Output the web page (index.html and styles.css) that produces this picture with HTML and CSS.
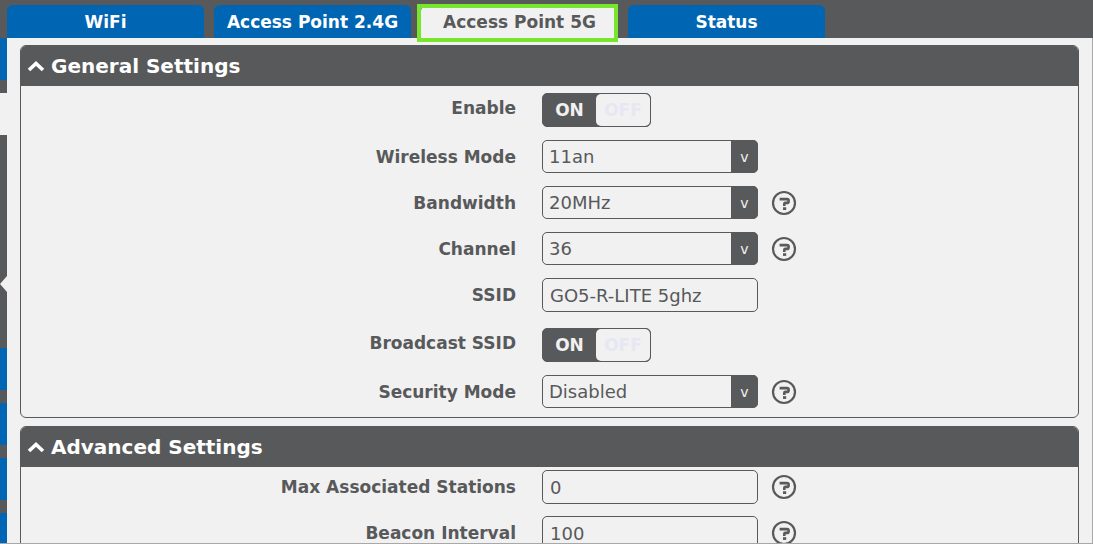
FILE: index.html
```html
<!DOCTYPE html>
<html lang="en">
<head>
    <meta charset="UTF-8">
    <meta name="viewport" content="width=device-width, initial-scale=1.0">
    <title>WiFi - Access Point 5G</title>
    <link rel="stylesheet" href="styles.css">
</head>
<body>
    <!-- Shared icons -->
    <svg class="icon-defs" aria-hidden="true">
        <symbol id="icon-help" viewBox="0 0 26 26">
            <circle cx="13" cy="13" r="11" fill="none" stroke="currentColor" stroke-width="2.2"/>
            <path d="M8.6 9.1H16Q17.6 9.1 17.6 10.6V11.4Q17.6 12.9 16 12.9H14.4Q13.3 12.9 13.3 14V16" fill="none" stroke="currentColor" stroke-width="2.6"/>
            <path d="M12 17.2h3.2v2.7h-3.2z" fill="currentColor"/>
        </symbol>
        <symbol id="icon-up" viewBox="0 0 18 12">
            <path d="M2 10L9 3.4L16 10" fill="none" stroke="currentColor" stroke-width="3.6"/>
        </symbol>
    </svg>

    <nav class="tabs">
        <a href="#" class="tab">WiFi</a>
        <a href="#" class="tab">Access Point 2.4G</a>
        <a href="#" class="tab active">Access Point 5G</a>
        <a href="#" class="tab">Status</a>
    </nav>

    <div class="page">
        <!-- Edge of the side menu -->
        <div class="rail">
            <div class="rail-item"></div>
            <div class="rail-item selected"></div>
            <div class="rail-submenu"><div class="rail-arrow"></div></div>
            <div class="rail-item"></div>
            <div class="rail-item"></div>
            <div class="rail-item"></div>
            <div class="rail-item"></div>
        </div>

        <main class="content">
            <section class="panel">
                <h2 class="panel-title"><svg class="chevron"><use href="#icon-up"/></svg>General Settings</h2>
                <div class="panel-body">
                    <div class="row row-toggle">
                        <label for="enable">Enable</label>
                        <div class="field">
                            <label class="toggle"><input type="checkbox" id="enable" checked><span class="on">ON</span><span class="off">OFF</span></label>
                        </div>
                    </div>
                    <div class="row">
                        <label for="mode">Wireless Mode</label>
                        <div class="field">
                            <div class="select"><select id="mode"><option>11an</option></select></div>
                        </div>
                    </div>
                    <div class="row">
                        <label for="bandwidth">Bandwidth</label>
                        <div class="field">
                            <div class="select"><select id="bandwidth"><option>20MHz</option></select></div>
                            <button class="help" aria-label="Help"><svg><use href="#icon-help"/></svg></button>
                        </div>
                    </div>
                    <div class="row">
                        <label for="channel">Channel</label>
                        <div class="field">
                            <div class="select"><select id="channel"><option>36</option></select></div>
                            <button class="help" aria-label="Help"><svg><use href="#icon-help"/></svg></button>
                        </div>
                    </div>
                    <div class="row">
                        <label for="ssid">SSID</label>
                        <div class="field">
                            <input type="text" id="ssid" value="GO5-R-LITE 5ghz">
                        </div>
                    </div>
                    <div class="row row-toggle">
                        <label for="broadcast">Broadcast SSID</label>
                        <div class="field">
                            <label class="toggle"><input type="checkbox" id="broadcast" checked><span class="on">ON</span><span class="off">OFF</span></label>
                        </div>
                    </div>
                    <div class="row">
                        <label for="security">Security Mode</label>
                        <div class="field">
                            <div class="select"><select id="security"><option>Disabled</option></select></div>
                            <button class="help" aria-label="Help"><svg><use href="#icon-help"/></svg></button>
                        </div>
                    </div>
                </div>
            </section>

            <section class="panel">
                <h2 class="panel-title"><svg class="chevron"><use href="#icon-up"/></svg>Advanced Settings</h2>
                <div class="panel-body compact">
                    <div class="row">
                        <label for="stations">Max Associated Stations</label>
                        <div class="field">
                            <input type="text" id="stations" value="0">
                            <button class="help" aria-label="Help"><svg><use href="#icon-help"/></svg></button>
                        </div>
                    </div>
                    <div class="row">
                        <label for="beacon">Beacon Interval</label>
                        <div class="field">
                            <input type="text" id="beacon" value="100">
                            <button class="help" aria-label="Help"><svg><use href="#icon-help"/></svg></button>
                        </div>
                    </div>
                </div>
            </section>
        </main>
    </div>
</body>
</html>
```
FILE: styles.css
```css
* {
    box-sizing: border-box;
}

body {
    margin: 0;
    height: 100vh;
    display: flex;
    flex-direction: column;
    overflow: hidden;
    background-color: #58595b;
    color: #58595b;
    font-family: Verdana, "DejaVu Sans", sans-serif;
    font-size: 17px;
}

.icon-defs {
    display: none;
}

/* Tabs */
.tabs {
    display: flex;
    gap: 10px;
    padding: 5px 7px 0;
}

.tab {
    position: relative;
    width: 197px;
    height: 33px;
    line-height: 34px;
    border-radius: 6px 6px 0 0;
    background-color: #0066b3;
    color: #fff;
    font-size: 17px;
    font-weight: bold;
    text-align: center;
    text-decoration: none;
    white-space: nowrap;
}

.tab.active {
    background-color: #f1f1f1;
    color: #58595b;
}

.tab.active::after {
    content: "";
    position: absolute;
    top: -1px;
    right: 0;
    bottom: -4px;
    left: -4px;
    border: 4px solid #79e62e;
}

/* Page */
.page {
    display: flex;
    flex: 1;
    min-height: 0;
    border-bottom: 1px solid #a8a8a8;
}

.rail {
    width: 7px;
    overflow: hidden;
}

.rail-item {
    height: 42px;
    margin-bottom: 13px;
    background-color: #0066b3;
}

.rail-item.selected {
    margin-bottom: 0;
    background-color: #f1f1f1;
}

.rail-submenu {
    height: 213px;
    padding-top: 141px;
}

.rail-arrow {
    border: solid transparent;
    border-width: 8px 7px 8px 0;
    border-right-color: #f1f1f1;
}

.content {
    flex: 1;
    padding: 7px 13px;
    overflow: hidden;
    background-color: #f1f1f1;
    border-right: 1px solid #a8a8a8;
}

/* Panels */
.panel {
    margin-bottom: 8px;
    border: 1px solid #58595b;
    border-radius: 6px;
    overflow: hidden;
}

.panel-title {
    display: flex;
    align-items: center;
    gap: 6px;
    height: 40px;
    margin: 0;
    padding-left: 6px;
    background-color: #58595b;
    color: #fff;
    font-size: 20px;
}

.chevron {
    width: 18px;
    height: 12px;
}

.panel-body {
    display: grid;
    gap: 13px;
    padding: 4px 41px 9px 0;
}

.panel-body.compact {
    gap: 12px;
    padding-top: 3px;
}

.row {
    display: grid;
    grid-template-columns: 1fr 1fr;
    align-items: center;
    column-gap: 26px;
}

.row > label {
    line-height: 30px;
    font-weight: bold;
    text-align: right;
}

.row-toggle {
    align-items: start;
    margin-top: 3px;
}

.field {
    display: flex;
    align-items: center;
    gap: 13px;
}

/* Controls */
input[type="text"],
select {
    width: 216px;
    height: 34px;
    padding: 0 7px;
    border: 1px solid #58595b;
    border-radius: 5px;
    background-color: #f1f1f1;
    color: #58595b;
    font-family: inherit;
    font-size: 18px;
}

select {
    display: block;
    height: 33px;
    padding: 0 6px;
    appearance: none;
}

.select {
    position: relative;
}

.select::after {
    content: "v";
    position: absolute;
    top: 0;
    right: 0;
    width: 27px;
    height: 33px;
    line-height: 34px;
    border-radius: 0 5px 5px 0;
    background-color: #58595b;
    color: #f1f1f1;
    font-size: 14px;
    text-align: center;
    pointer-events: none;
}

.toggle {
    position: relative;
    display: flex;
    width: 109px;
    height: 34px;
    border: 1px solid #58595b;
    border-radius: 5px;
    background-color: #58595b;
    line-height: 33px;
    font-size: 17px;
    font-weight: bold;
    text-align: center;
}

.toggle input {
    position: absolute;
    opacity: 0;
}

.toggle .on {
    width: 53px;
    color: #f1f1f1;
}

.toggle .off {
    flex: 1;
    border-radius: 5px;
    background-color: #f1f1f1;
    color: #e7e7f3;
}

.help {
    width: 26px;
    height: 26px;
    padding: 0;
    border: none;
    background: none;
    color: #58595b;
    cursor: pointer;
}

.help svg {
    display: block;
    width: 26px;
    height: 26px;
}
```
